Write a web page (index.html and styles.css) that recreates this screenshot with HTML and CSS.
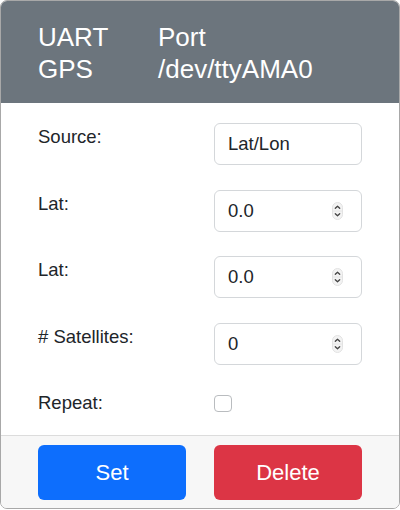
FILE: index.html
```html
<!DOCTYPE html>
<html>
<head>
<meta charset="utf-8">
<link rel="stylesheet" href="styles.css">
</head>
<body>
<div class="card">
  <div class="card-header">
    <div>UART</div><div>Port</div>
    <div>GPS</div><div>/dev/ttyAMA0</div>
  </div>
  <div class="card-body">
    <label class="lbl">Source:</label>
    <div class="field"><input class="txt" type="text" value="Lat/Lon"></div>

    <label class="lbl">Lat:</label>
    <div class="field"><input class="txt" type="text" value="0.0"><svg class="spin" width="11" height="18" viewBox="0 0 11 18"><rect x="0.5" y="0.5" width="10" height="17" rx="5" fill="#f3f3f3" stroke="#e2e2e2"/><line x1="1" y1="9" x2="10" y2="9" stroke="#e6e6e6"/><path d="M3.3 6.3 L5.5 4.2 L7.7 6.3" fill="none" stroke="#444" stroke-width="1.3" stroke-linecap="round" stroke-linejoin="round"/><path d="M3.3 11.7 L5.5 13.8 L7.7 11.7" fill="none" stroke="#444" stroke-width="1.3" stroke-linecap="round" stroke-linejoin="round"/></svg></div>

    <label class="lbl">Lat:</label>
    <div class="field"><input class="txt" type="text" value="0.0"><svg class="spin" width="11" height="18" viewBox="0 0 11 18"><rect x="0.5" y="0.5" width="10" height="17" rx="5" fill="#f3f3f3" stroke="#e2e2e2"/><line x1="1" y1="9" x2="10" y2="9" stroke="#e6e6e6"/><path d="M3.3 6.3 L5.5 4.2 L7.7 6.3" fill="none" stroke="#444" stroke-width="1.3" stroke-linecap="round" stroke-linejoin="round"/><path d="M3.3 11.7 L5.5 13.8 L7.7 11.7" fill="none" stroke="#444" stroke-width="1.3" stroke-linecap="round" stroke-linejoin="round"/></svg></div>

    <label class="lbl"># Satellites:</label>
    <div class="field"><input class="txt" type="text" value="0"><svg class="spin" width="11" height="18" viewBox="0 0 11 18"><rect x="0.5" y="0.5" width="10" height="17" rx="5" fill="#f3f3f3" stroke="#e2e2e2"/><line x1="1" y1="9" x2="10" y2="9" stroke="#e6e6e6"/><path d="M3.3 6.3 L5.5 4.2 L7.7 6.3" fill="none" stroke="#444" stroke-width="1.3" stroke-linecap="round" stroke-linejoin="round"/><path d="M3.3 11.7 L5.5 13.8 L7.7 11.7" fill="none" stroke="#444" stroke-width="1.3" stroke-linecap="round" stroke-linejoin="round"/></svg></div>

    <label class="lbl">Repeat:</label>
    <div class="checkwrap"><input class="check" type="checkbox"></div>
  </div>
  <div class="card-footer">
    <button class="btn btn-blue">Set</button>
    <button class="btn btn-red">Delete</button>
  </div>
</div>
</body>
</html>
```

FILE: styles.css
```css
html, body {
  margin: 0;
  padding: 0;
  background: #ffffff;
}
body {
  font-family: "Liberation Sans", Arial, sans-serif;
  color: #212529;
}
.card {
  width: 400px;
  height: 509px;
  box-sizing: border-box;
  border: 1px solid #a8a8a8;
  border-radius: 7px;
  overflow: hidden;
  display: flex;
  flex-direction: column;
}
.card-header {
  background: #6c757d;
  color: #ffffff;
  font-size: 26px;
  line-height: 31px;
  padding: 21px 37px 18px 37px;
  display: grid;
  grid-template-columns: 120px auto;
  height: 102px;
  box-sizing: border-box;
}
.card-body {
  padding: 20px 37px 0 37px;
  display: grid;
  grid-template-columns: 148px 148px;
  column-gap: 28px;
  row-gap: 24.5px;
  align-items: start;
  align-content: start;
  flex: 1;
}
.lbl {
  font-size: 18.5px;
  line-height: 27px;
  color: #212529;
}
.field {
  height: 42px;
  box-sizing: border-box;
  border: 1px solid #d4d7da;
  border-radius: 6px;
  display: flex;
  align-items: center;
  padding: 0 18px 0 13px;
  background: #fff;
}
.txt {
  flex: 1;
  min-width: 0;
  border: none;
  outline: none;
  padding: 0;
  margin: 0;
  font-family: "Liberation Sans", Arial, sans-serif;
  font-size: 18.5px;
  color: #212529;
  background: transparent;
}
.spin {
  flex: none;
  display: block;
}
.checkwrap {
  height: 27px;
  display: flex;
  align-items: flex-start;
}
.check {
  appearance: none;
  -webkit-appearance: none;
  margin: 6px 0 0 0;
  width: 18px;
  height: 17px;
  border: 1px solid #b9bcbf;
  border-radius: 4px;
  background: #fff;
}
.card-footer {
  background: #f7f7f7;
  border-top: 1px solid #dcdcdc;
  padding: 9px 37px 8px 37px;
  display: grid;
  grid-template-columns: 148px 148px;
  column-gap: 28px;
}
.btn {
  height: 55px;
  border: none;
  border-radius: 6px;
  color: #ffffff;
  font-family: "Liberation Sans", Arial, sans-serif;
  font-size: 22px;
  padding: 0;
}
.btn-blue {
  background: #0d6efd;
}
.btn-red {
  background: #dc3545;
}
```
